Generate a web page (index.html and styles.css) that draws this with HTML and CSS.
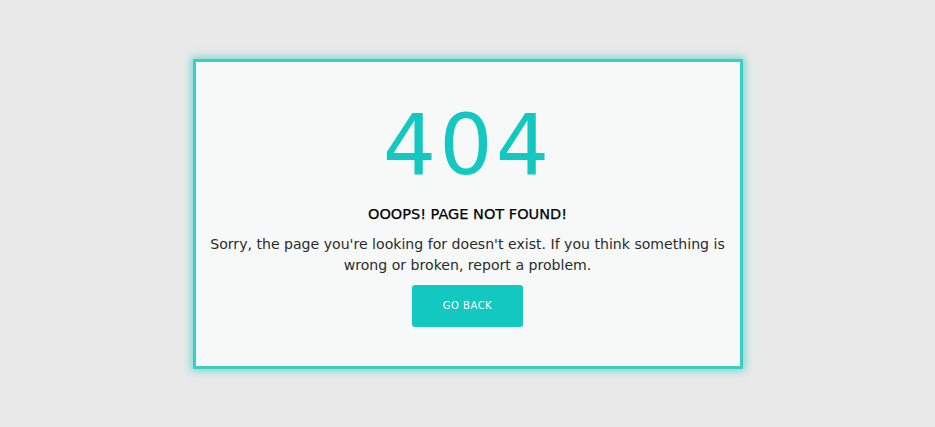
FILE: index.html
```html
<!DOCTYPE html>
<html>
<head>
<meta charset="utf-8">
<link rel="stylesheet" href="styles.css">
</head>
<body>
<div class="card">
  <h1 class="code">404</h1>
  <h2 class="title">OOOPS! PAGE NOT FOUND!</h2>
  <p class="msg">Sorry, the page you're looking for doesn't exist. If you think something is wrong or broken, report a problem.</p>
  <a class="btn" href="#">GO BACK</a>
</div>
</body>
</html>
```
FILE: styles.css
```css
html, body { margin: 0; padding: 0; }
body {
  background: #e9e9e9;
  height: 427px;
  display: flex;
  align-items: center;
  justify-content: center;
  font-family: "DejaVu Sans", "Open Sans", sans-serif;
}
.card {
  box-sizing: border-box;
  width: 550px;
  height: 310px;
  background: #f7f9f9;
  border: 3px solid #3ecdc5;
  box-shadow: 0 0 8px 2px rgba(30, 205, 195, 0.55);
  display: flex;
  flex-direction: column;
  align-items: center;
  padding: 28px 6px 0;
  text-align: center;
}
.code {
  margin: 0;
  font-size: 84px;
  font-weight: 400;
  line-height: 110px;
  color: #12c8c1;
  letter-spacing: 3px;
}
.title {
  margin: 4px 0 0;
  font-size: 14.5px;
  font-weight: 400;
  color: #000;
  line-height: 20px;
  -webkit-text-stroke: 0.25px #000;
}
.msg {
  margin: 10px 0 0;
  font-size: 14.1px;
  line-height: 21px;
  color: #2a2a2a;
}
.btn {
  margin-top: 9px;
  width: 111px;
  height: 42px;
  box-sizing: border-box;
  display: flex;
  align-items: center;
  justify-content: center;
  background: #12c8c1;
  color: #fff;
  border-radius: 3px;
  font-size: 10px;
  letter-spacing: 0.5px;
  text-decoration: none;
}
```
